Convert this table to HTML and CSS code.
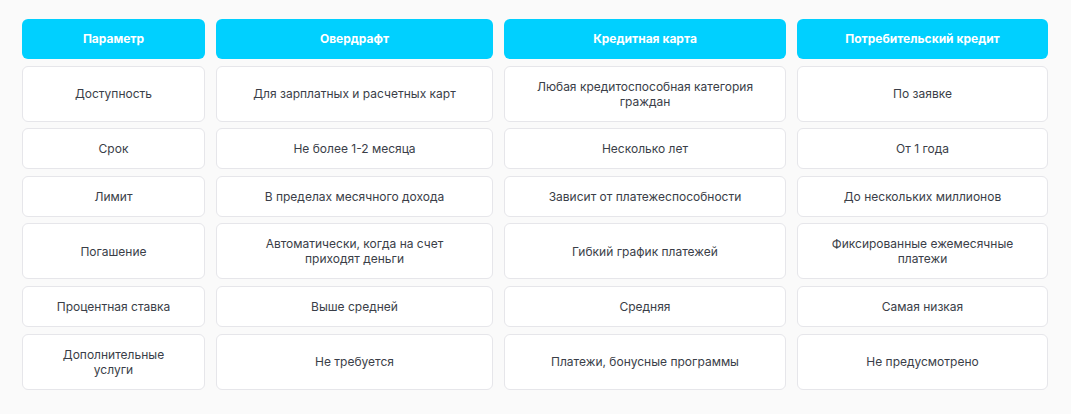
FILE: index.html
```html
<!DOCTYPE html>
<html lang="ru">
<head>
<meta charset="utf-8">
<link rel="stylesheet" href="styles.css">
</head>
<body>
<div class="wrap">
  <div class="grid">
    <div class="head">Параметр</div>
    <div class="head">Овердрафт</div>
    <div class="head">Кредитная карта</div>
    <div class="head">Потребительский кредит</div>

    <div class="cell">Доступность</div>
    <div class="cell">Для зарплатных и расчетных карт</div>
    <div class="cell">Любая кредитоспособная категория граждан</div>
    <div class="cell">По заявке</div>

    <div class="cell">Срок</div>
    <div class="cell">Не более 1-2 месяца</div>
    <div class="cell">Несколько лет</div>
    <div class="cell">От 1 года</div>

    <div class="cell">Лимит</div>
    <div class="cell">В пределах месячного дохода</div>
    <div class="cell">Зависит от платежеспособности</div>
    <div class="cell">До нескольких миллионов</div>

    <div class="cell">Погашение</div>
    <div class="cell">Автоматически, когда на счет приходят деньги</div>
    <div class="cell">Гибкий график платежей</div>
    <div class="cell">Фиксированные ежемесячные платежи</div>

    <div class="cell">Процентная ставка</div>
    <div class="cell">Выше средней</div>
    <div class="cell">Средняя</div>
    <div class="cell">Самая низкая</div>

    <div class="cell">Дополнительные услуги</div>
    <div class="cell">Не требуется</div>
    <div class="cell">Платежи, бонусные программы</div>
    <div class="cell">Не предусмотрено</div>
  </div>
</div>
</body>
</html>
```

FILE: styles.css
```css
html, body {
  margin: 0;
  padding: 0;
  background: #fafafa;
}
body {
  font-family: Inter, "Noto Sans", sans-serif;
  color: #3a3e48;
}
.wrap {
  padding: 19px 23px 23px 22px;
}
.grid {
  display: grid;
  grid-template-columns: 183px 277px 282px 251px;
  column-gap: 11px;
  row-gap: 6.6px;
}
.head {
  background: #00d0ff;
  color: #ffffff;
  font-weight: 700;
  font-size: 12px;
  line-height: 16px;
  padding: 12px 10px;
  border-radius: 6px;
  text-align: center;
}
.cell {
  background: #ffffff;
  border: 1px solid #e6e6ea;
  border-radius: 6px;
  font-size: 12px;
  line-height: 15px;
  padding: 12px 25px;
  text-align: center;
  display: flex;
  align-items: center;
  justify-content: center;
}
```
